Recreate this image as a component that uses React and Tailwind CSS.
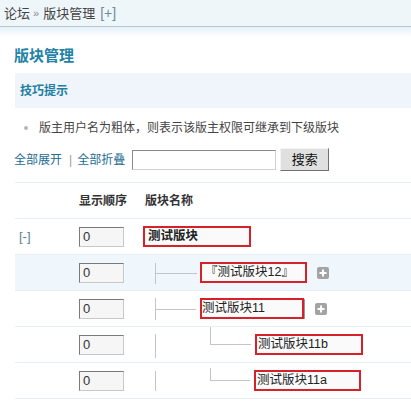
export default function App() {
  const Num = () => (
    <div className="w-[45px] h-[20px] border border-t-[#7a7a7a] border-l-[#7a7a7a] border-r-[#c8c8c8] border-b-[#c8c8c8] bg-[#f6f6f6] flex items-center pl-[3px] text-[13px] text-[#333] leading-none">
      0
    </div>
  );
  const Plus = () => (
    <div className="w-[12px] h-[12px] rounded-[2px] bg-[#a3a3a3] flex items-center justify-center ml-[10px]">
      <svg width="8" height="8" viewBox="0 0 8 8">
        <rect x="3" y="0.5" width="2" height="7" fill="#fff" />
        <rect x="0.5" y="3" width="7" height="2" fill="#fff" />
      </svg>
    </div>
  );
  const Box = ({ children, w, bold, pl = "pl-[2px]" }) => (
    <div
      className={`h-[21px] border-2 border-[#d6212b] bg-[#fafafa] flex items-center ${pl} text-[12.5px] leading-none text-[#222] ${bold ? "font-bold" : ""}`}
      style={{ width: w }}
    >
      {children}
    </div>
  );
  const line = "#c4c4c4";
  return (
    <div className="w-[411px] h-[404px] overflow-hidden bg-white font-['Liberation_Sans','Noto_Sans_CJK_SC',sans-serif] text-[12px] text-[#333]">
      <div className="h-[27px] bg-[#eff6fa] border-b border-[#b6c7ca] flex items-center pl-[4px] text-[13px] text-[#444] leading-none">
        <span>论坛</span>
        <span className="ml-[3px] mr-[4px] text-[#888] text-[11px]">»</span>
        <span>版块管理</span>
        <span className="ml-[5px] text-[14px] text-[#6a8aa0]">[+]</span>
      </div>
      <div className="h-[10px] bg-gradient-to-b from-[#e4f1f9] to-white" />
      <div className="pl-[14px]">
        <div className="h-[36px] flex items-center text-[15px] font-bold text-[#2283a6] leading-none">
          版块管理
        </div>
      </div>
      <div className="pl-[15px]">
        <div className="h-[35px] bg-[#eff5fb] flex items-center pl-[5px] font-bold text-[#1f80a3] leading-none">
          技巧提示
        </div>
        <div className="h-[40px] flex items-center leading-none text-[#444]">
          <span className="w-[4px] h-[4px] rounded-full bg-[#b5b5b5] ml-[9px] mr-[11px]" />
          版主用户名为粗体，则表示该版主权限可继承到下级版块
        </div>
      </div>
      <div className="h-[23px] flex items-center pl-[14px] leading-none">
        <span className="text-[#256c92]">全部展开</span>
        <span className="mx-[7px] text-[#999]">|</span>
        <span className="text-[#256c92] -ml-[2px]">全部折叠</span>
        <div className="ml-[7px] w-[144px] h-[20px] border border-t-[#8a8a8a] border-l-[#8a8a8a] border-r-[#d0d0d0] border-b-[#d0d0d0] bg-white" />
        <div className="ml-[4px] w-[49px] h-[23px] bg-[#e0e0e0] border border-t-[#f4f4f4] border-l-[#f4f4f4] border-r-[#707070] border-b-[#707070] flex items-center justify-center text-[13px] text-[#111]">
          搜索
        </div>
      </div>
      <div className="pl-[15px] mt-[11px]">
        <div className="h-[37px] border-t border-b border-[#e6eef1] flex items-center leading-none font-bold text-[#333]">
          <div className="w-[64px]" />
          <div className="w-[66px]">显示顺序</div>
          <div>版块名称</div>
        </div>
        {/* row 1 */}
        <div className="h-[36px] border-b border-[#e6eef1] flex items-center">
          <div className="w-[64px] pl-[4px] text-[#5d7f94] text-[13px] leading-none">[-]</div>
          <div className="w-[64px]"><Num /></div>
          <Box w={108} bold pl="pl-[3px]">测试版块</Box>
        </div>
        {/* row 2 */}
        <div className="h-[36px] border-b border-[#e6eef1] bg-[#f0f7fc] flex items-center">
          <div className="w-[64px]" />
          <div className="w-[64px]"><Num /></div>
          <svg width="57" height="35" className="shrink-0">
            <line x1="12.5" y1="8" x2="12.5" y2="29" stroke={line} />
            <line x1="12" y1="18.5" x2="54" y2="18.5" stroke={line} />
          </svg>
          <Box w={107} pl="pl-[3px]">『测试版块12』</Box>
          <Plus />
        </div>
        {/* row 3 */}
        <div className="h-[36px] border-b border-[#e6eef1] flex items-center">
          <div className="w-[64px]" />
          <div className="w-[64px]"><Num /></div>
          <svg width="57" height="35" className="shrink-0">
            <line x1="12.5" y1="7" x2="12.5" y2="29" stroke={line} />
            <line x1="12" y1="18.5" x2="53" y2="18.5" stroke={line} />
          </svg>
          <Box w={104} pl="pl-[0px]">测试版块11</Box>
          <div className="w-[1px] h-[20px] bg-[#999]" />
          <Plus />
        </div>
        {/* row 4 */}
        <div className="h-[36px] border-b border-[#e6eef1] flex items-center">
          <div className="w-[64px]" />
          <div className="w-[64px]"><Num /></div>
          <svg width="112" height="35" className="shrink-0">
            <line x1="12.5" y1="7" x2="12.5" y2="31" stroke={line} />
            <line x1="67.5" y1="0" x2="67.5" y2="18" stroke={line} />
            <line x1="67" y1="17.5" x2="108" y2="17.5" stroke={line} />
          </svg>
          <Box w={108} pl="pl-[1px]">测试版块11b</Box>
        </div>
        {/* row 5 */}
        <div className="h-[36px] border-b border-[#e6eef1] flex items-center">
          <div className="w-[64px]" />
          <div className="w-[64px]"><Num /></div>
          <svg width="111" height="35" className="shrink-0">
            <line x1="12.5" y1="8" x2="12.5" y2="28" stroke={line} />
            <line x1="67.5" y1="5" x2="67.5" y2="18" stroke={line} />
            <line x1="67" y1="17.5" x2="107" y2="17.5" stroke={line} />
          </svg>
          <Box w={107} pl="pl-[1px]">测试版块11a</Box>
        </div>
      </div>
    </div>
  );
}
